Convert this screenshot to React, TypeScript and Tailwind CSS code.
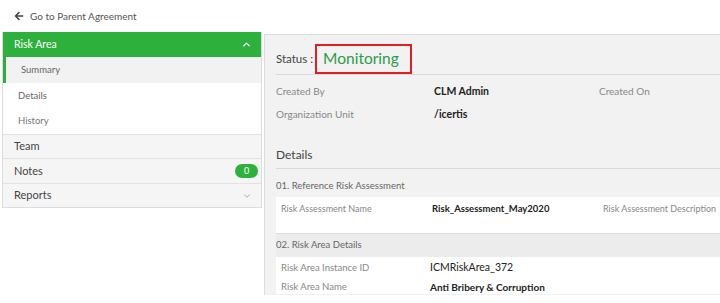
import React from "react";
import { FaArrowLeft } from "react-icons/fa";
import { FiChevronUp, FiChevronDown } from "react-icons/fi";

const font = { fontFamily: 'Lato, "Open Sans", sans-serif' };

const App = () => {
  return (
    <div className="w-[720px] h-[303px] bg-white overflow-hidden" style={font}>
      <div className="flex items-center h-[32px] pl-[14px] gap-[6px] text-[10px] text-[#555]">
        <FaArrowLeft className="w-[10px] h-[10px] text-[#444]" />
        <span>Go to Parent Agreement</span>
      </div>

      <div className="flex">
        <div className="ml-[2px] w-[260px] shrink-0 h-[176px] border-x border-b border-[#ddd]">
          <div className="flex items-center justify-between h-[25px] bg-[#2eb03c] text-white text-[10.5px] pl-[11px] pr-[9px]">
            <span>Risk Area</span>
            <FiChevronUp className="w-[11px] h-[11px]" strokeWidth={3} />
          </div>
          <div className="flex items-center h-[26px] bg-[#f2f2f2] border-l-[3px] border-[#2eb03c] pl-[15px] text-[9.5px] text-[#666]">
            Summary
          </div>
          <div className="flex items-center h-[26px] pl-[15px] text-[9.5px] text-[#666]">Details</div>
          <div className="flex items-center h-[25px] pl-[15px] text-[9.5px] text-[#777]">History</div>
          <div className="flex items-center h-[24px] pl-[11px] text-[11px] text-[#444] bg-[#f5f5f5] border-t border-[#e2e2e2]">
            Team
          </div>
          <div className="flex items-center justify-between h-[25px] pl-[11px] pr-[3px] text-[11px] text-[#444] bg-[#f5f5f5] border-t border-[#e2e2e2]">
            <span>Notes</span>
            <span className="flex items-center justify-center w-[23px] h-[14px] rounded-full bg-[#2eb03c] text-white text-[9px]">0</span>
          </div>
          <div className="flex items-center justify-between h-[24px] pl-[11px] pr-[9px] text-[11px] text-[#444] bg-[#f5f5f5] border-t border-[#e2e2e2]">
            <span>Reports</span>
            <FiChevronDown className="w-[10px] h-[10px] text-[#999]" />
          </div>
        </div>

        <div className="ml-[2px] flex-1 h-[261px] mt-[2px] bg-[#f2f2f2] border-l border-t border-[#ddd] pl-[11px]">
          <div className="flex items-center h-[40px] pt-[9px] border-b border-[#d9d9d9]">
            <span className="text-[11.5px] text-[#444]">Status :</span>
            <span className="ml-[2px] shrink-0 flex items-center h-[30px] pl-[6px] pr-[11px] border-2 border-[#e0201e] text-[15.5px] text-[#2e9a4a]">
              Monitoring
            </span>
          </div>

          <div className="flex items-center h-[23px] mt-[5px] text-[10px]">
            <span className="w-[158px] text-[#888]">Created By</span>
            <span className="w-[165px] text-[#222] font-bold text-[10.5px]">CLM Admin</span>
            <span className="text-[#888]">Created On</span>
          </div>
          <div className="flex items-center h-[23px] text-[10px]">
            <span className="w-[158px] text-[#888]">Organization Unit</span>
            <span className="text-[#222] font-bold text-[10.5px]">/icertis</span>
          </div>

          <div className="flex items-end h-[43px] pb-[4px] border-b border-[#d9d9d9] text-[12px] text-[#444]">
            Details
          </div>

          <div className="flex items-center h-[28px] pt-[6px] text-[9.5px] text-[#666]">01. Reference Risk Assessment</div>
          <div className="flex bg-white h-[37px] pl-[5px] pt-[5px] text-[9px] border-b border-[#ddd] whitespace-nowrap">
            <span className="w-[151px] text-[#888]">Risk Assessment Name</span>
            <span className="w-[171px] text-[#222] font-bold text-[9.5px]">Risk_Assessment_May2020</span>
            <span className="text-[#888]">Risk Assessment Description</span>
          </div>

          <div className="flex items-center h-[23px] text-[9.5px] text-[#666] bg-[#ececec]">02. Risk Area Details</div>
          <div className="bg-white h-[37px] pl-[5px] pt-[2px]">
            <div className="flex items-center h-[18px]">
              <span className="w-[149px] text-[9.5px] text-[#888]">Risk Area Instance ID</span>
              <span className="text-[10.5px] text-[#222]">ICMRiskArea_372</span>
            </div>
            <div className="flex items-center h-[20px]">
              <span className="w-[149px] text-[9.5px] text-[#888]">Risk Area Name</span>
              <span className="text-[10px] text-[#222] font-bold">Anti Bribery &amp; Corruption</span>
            </div>
          </div>
        </div>
      </div>
    </div>
  );
};

export default App;
